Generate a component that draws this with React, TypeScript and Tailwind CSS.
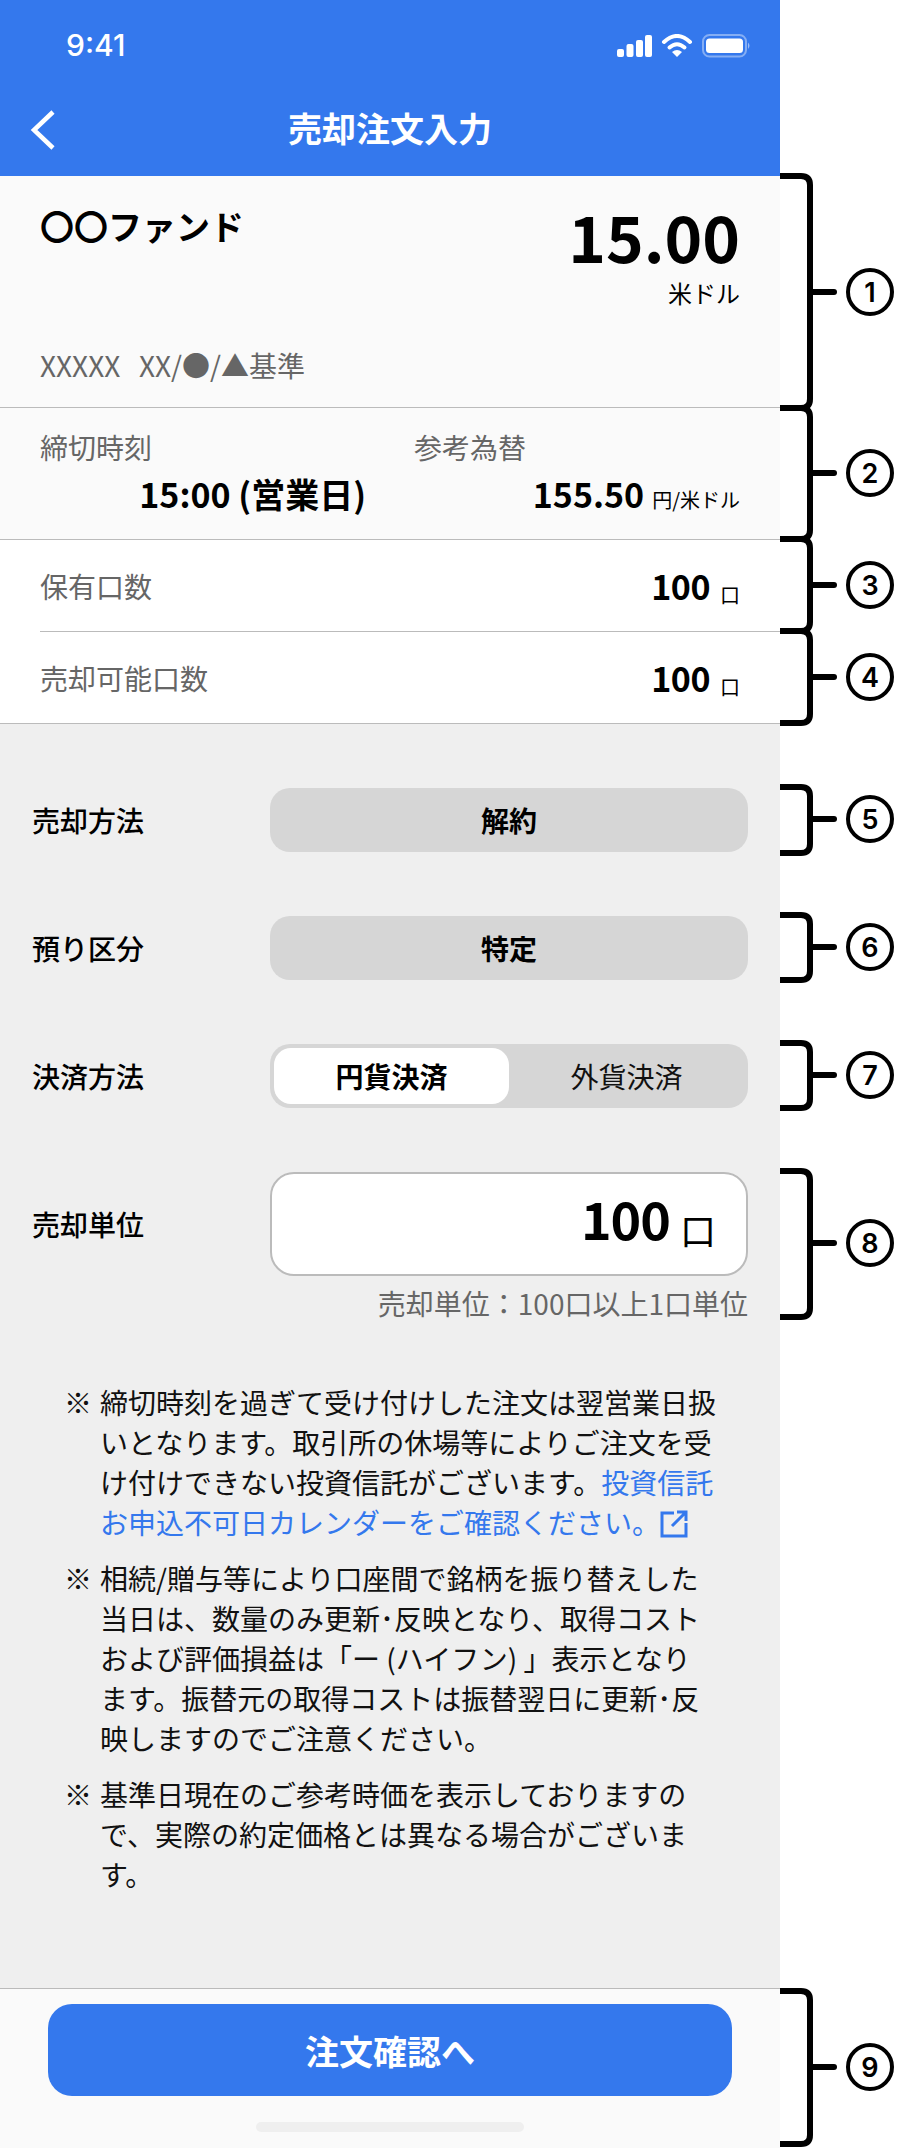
import React from "react";

const brackets = [
  { n: 1, t: 176, b: 408, m: 292 },
  { n: 2, t: 408, b: 539, m: 473 },
  { n: 3, t: 539, b: 631, m: 585 },
  { n: 4, t: 631, b: 723, m: 677 },
  { n: 5, t: 787, b: 853, m: 819 },
  { n: 6, t: 915, b: 980, m: 947 },
  { n: 7, t: 1043, b: 1108, m: 1075 },
  { n: 8, t: 1171, b: 1317, m: 1243 },
  { n: 9, t: 1991, b: 2144, m: 2067 },
];

function Annotations() {
  return (
    <svg width="136" height="2148" viewBox="780 0 136 2148" className="block flex-none">
      {brackets.map((x) => (
        <g key={x.n}>
          <path
            d={`M780 ${x.t} H801 Q810 ${x.t} 810 ${x.t + 9} V${x.b - 9} Q810 ${x.b} 801 ${x.b} H780`}
            fill="none"
            stroke="#000"
            strokeWidth="6"
          />
          <path d={`M810 ${x.m} H834`} stroke="#000" strokeWidth="6" strokeLinecap="round" />
          <circle cx="870" cy={x.m} r="22" fill="#fff" stroke="#000" strokeWidth="4" />
          <text
            x="870"
            y={x.m + 10}
            textAnchor="middle"
            fontSize="27"
            fontWeight="600"
            fontFamily="Inter, sans-serif"
            fill="#000"
          >
            {x.n}
          </text>
        </g>
      ))}
    </svg>
  );
}

function StatusIcons() {
  return (
    <svg width="136" height="24" viewBox="616 34 136 24" className="block">
      <rect x="617" y="49" width="7" height="8" rx="2" fill="#fff" />
      <rect x="626.5" y="44" width="7" height="13" rx="2" fill="#fff" />
      <rect x="636" y="40" width="7" height="17" rx="2" fill="#fff" />
      <rect x="645" y="35" width="7" height="22" rx="2" fill="#fff" />
      <path d="M664 42 Q677 30 690 42" fill="none" stroke="#fff" strokeWidth="4" strokeLinecap="round" />
      <path d="M669.5 47.5 Q677 41 684.5 47.5" fill="none" stroke="#fff" strokeWidth="4" strokeLinecap="round" />
      <path d="M672 52 Q677 48 682 52 L677 57 Z" fill="#fff" />
      <rect x="703" y="35" width="43" height="21.5" rx="6.5" fill="none" stroke="#fff" strokeOpacity="0.4" strokeWidth="2" />
      <rect x="706" y="38.5" width="37" height="14.5" rx="3.5" fill="#fff" />
      <path d="M748 42.5 Q751 45.5 748 49 Z" fill="#fff" fillOpacity="0.5" />
    </svg>
  );
}

function Row({ label, children }: { label: string; children: React.ReactNode }) {
  return (
    <div className="flex items-center pl-[32px] pr-[32px]">
      <div className="w-[238px] flex-none text-[28px] leading-[40px] font-medium text-black">{label}</div>
      <div className="flex-1">{children}</div>
    </div>
  );
}

function Fixed({ children }: { children: React.ReactNode }) {
  return (
    <div className="h-[64px] rounded-[20px] bg-[#d6d6d6] flex items-center justify-center text-[28px] font-bold text-black">
      {children}
    </div>
  );
}

function Note({ children }: { children: React.ReactNode }) {
  return (
    <div className="flex text-[28px] leading-[40px] text-[#111]">
      <span className="w-[36px] flex-none">※</span>
      <p className="whitespace-nowrap">{children}</p>
    </div>
  );
}

function Units({ value }: { value: string }) {
  return (
    <span className="flex items-baseline gap-[10px] text-black">
      <span className="text-[34px] leading-[50px] font-bold tracking-[-0.5px]">{value}</span>
      <span className="text-[20px] translate-y-[3px]">口</span>
    </span>
  );
}

export default function App() {
  return (
    <div className="flex w-[916px] h-[2148px] bg-white overflow-hidden font-['Noto_Sans_CJK_JP','Noto_Sans',sans-serif]">
      <div className="w-[780px] flex-none flex flex-col h-full">
        <header className="bg-[#3478ed] h-[176px] flex-none text-white">
          <div className="h-[90px] flex items-center justify-between pl-[66px] pr-[28px] pt-[1px]">
            <span className="text-[30px] font-medium font-['Inter',sans-serif]">9:41</span>
            <StatusIcons />
          </div>
          <div className="h-[76px] grid grid-cols-[1fr_auto_1fr] items-center">
            <svg width="26" height="42" viewBox="0 0 26 42" className="ml-[30px] mt-[3px]">
              <path d="M23 3 L4 21 L23 39" fill="none" stroke="#fff" strokeWidth="4.5" />
            </svg>
            <h1 className="text-[34px] leading-[44px] font-bold">売却注文入力</h1>
            <div />
          </div>
        </header>

        <section className="h-[232px] flex-none bg-[#fafafa] border-b border-[#bbbbbb] px-[40px] flex flex-col">
          <div className="flex justify-between">
            <div className="mt-[28px] text-[34px] leading-[44px] font-bold text-black">〇〇ファンド</div>
            <div className="flex flex-col items-end mt-[21px]">
              <div className="text-[64px] leading-[76px] font-bold text-black">15.00</div>
              <div className="mt-[4px] text-[24px] leading-[32px] text-black">米ドル</div>
            </div>
          </div>
          <div className="mt-auto mb-[22px] text-[28px] leading-[40px] text-[#666]">XXXXX&nbsp;&nbsp;&nbsp;XX/●/▲基準</div>
        </section>

        <section className="h-[132px] flex-none bg-[#fafafa] border-b border-[#bbbbbb] px-[40px] grid grid-cols-2 gap-x-[48px] pt-[19px]">
          <div>
            <div className="text-[28px] leading-[40px] text-[#666]">締切時刻</div>
            <div className="mt-[2px] text-right text-[34px] leading-[50px] font-bold text-black">15:00 (営業日)</div>
          </div>
          <div>
            <div className="text-[28px] leading-[40px] text-[#666]">参考為替</div>
            <div className="mt-[2px] flex items-baseline justify-end gap-[8px] text-black">
              <span className="text-[34px] leading-[50px] font-bold">155.50</span>
              <span className="text-[20px]">円/米ドル</span>
            </div>
          </div>
        </section>

        <section className="flex-none bg-white border-b border-[#bbbbbb]">
          <div className="ml-[40px] pr-[40px] h-[92px] border-b border-[#bbbbbb] flex items-center justify-between">
            <span className="text-[28px] leading-[40px] text-[#666]">保有口数</span>
            <Units value="100" />
          </div>
          <div className="pl-[40px] pr-[40px] h-[91px] flex items-center justify-between">
            <span className="text-[28px] leading-[40px] text-[#666]">売却可能口数</span>
            <Units value="100" />
          </div>
        </section>

        <main className="flex-1 bg-[#efefef] pt-[64px] flex flex-col">
          <div className="flex flex-col gap-[64px]">
            <Row label="売却方法">
              <Fixed>解約</Fixed>
            </Row>
            <Row label="預り区分">
              <Fixed>特定</Fixed>
            </Row>
            <Row label="決済方法">
              <div className="h-[64px] rounded-[20px] bg-[#d6d6d6] p-[4px] grid grid-cols-2 text-[28px]">
                <div className="rounded-[17px] bg-white flex items-center justify-center font-bold text-black">円貨決済</div>
                <div className="flex items-center justify-center text-[#111]">外貨決済</div>
              </div>
            </Row>
            <Row label="売却単位">
              <div className="h-[104px] rounded-[24px] bg-white border-2 border-[#bbbbbb] flex items-baseline justify-end pr-[30px] pt-[9px] text-black">
                <span className="text-[52px] leading-[70px] font-bold tracking-[-1px]">100</span>
                <span className="ml-[10px] text-[36px] translate-y-[5px]">口</span>
              </div>
            </Row>
          </div>
          <div className="mt-[7px] pr-[32px] text-right text-[28px] leading-[40px] text-[#666]">売却単位：100口以上1口単位</div>
          <div className="mt-[59px] pl-[64px] flex flex-col gap-[16px]">
            <Note>
              締切時刻を過ぎて受け付けした注文は翌営業日扱
              <br />
              いとなります。取引所の休場等によりご注文を受
              <br />
              け付けできない投資信託がございます。<span className="text-[#3478ed]">投資信託</span>
              <br />
              <span className="text-[#3478ed]">
                お申込不可日カレンダーをご確認ください。
                <svg width="28" height="28" viewBox="0 0 28 28" className="inline-block align-[-4px]">
                  <path d="M14 3 H2 V26 H26 V13 M12 16 L26 2 M17 2 H26 V11" fill="none" stroke="#3478ed" strokeWidth="3" />
                </svg>
              </span>
            </Note>
            <Note>
              相続/贈与等により口座間で銘柄を振り替えした
              <br />
              当日は、数量のみ更新･反映となり、取得コスト
              <br />
              および評価損益は「ー (ハイフン) 」表示となり
              <br />
              ます。振替元の取得コストは振替翌日に更新･反
              <br />
              映しますのでご注意ください。
            </Note>
            <Note>
              基準日現在のご参考時価を表示しておりますの
              <br />
              で、実際の約定価格とは異なる場合がございま
              <br />
              す。
            </Note>
          </div>
        </main>

        <footer className="h-[160px] flex-none bg-[#fafafa] border-t border-[#bbbbbb] flex flex-col items-center pt-[15px]">
          <button className="w-[684px] h-[92px] rounded-[24px] bg-[#3478ed] text-white text-[34px] font-bold flex items-center justify-center">
            注文確認へ
          </button>
          <div className="mt-[26px] w-[268px] h-[10px] rounded-full bg-[#efefef]" />
        </footer>
      </div>
      <Annotations />
    </div>
  );
}
